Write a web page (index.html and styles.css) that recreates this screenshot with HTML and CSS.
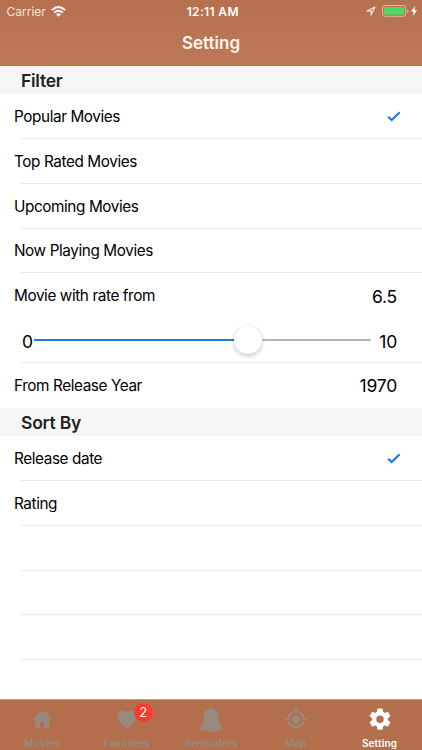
FILE: index.html
```
<!DOCTYPE html>
<html lang="en">
<head>
<meta charset="utf-8">
<title>Setting</title>
<link rel="stylesheet" href="styles.css">
</head>
<body>
<div class="app">
  <header class="header">
    <div class="status">
      <div class="status-left"><span class="carrier">Carrier</span>
        <svg class="wifi" viewBox="0 0 15 11"><g fill="none" stroke="#fff" stroke-width="1.9"><path d="M.8 4.1Q7.5-2 14.2 4.1M3.2 6.6Q7.5 2.7 11.8 6.6"/></g><path fill="#fff" d="M5 8.2Q7.5 6.2 10 8.2L7.5 10.8Z"/></svg>
      </div>
      <span class="time">12:11 AM</span>
      <div class="status-right">
        <svg class="location" viewBox="0 0 10 10"><path d="M.9 4.9 9 1 5.1 9.1V4.9Z" fill="none" stroke="#fbe9e1" stroke-width="1.1" stroke-linejoin="round"/></svg>
        <svg class="battery" viewBox="0 0 28 12"><rect x=".5" y=".5" width="23.2" height="10.8" rx="2.6" fill="none" stroke="#e0b9a6"/><rect x="2" y="2" width="20.2" height="7.8" rx="1.2" fill="#4cd964"/><path d="M25 4q1.5.5 1.5 2T25 8Z" fill="#d9ad98"/></svg>
        <svg class="bolt" viewBox="0 0 6 10"><path d="M4.1 0 0 5.6h2.5L1.8 10 6 4.2H3.5Z" fill="#fff"/></svg>
      </div>
    </div>
    <h1 class="title">Setting</h1>
  </header>
  <main class="list">
    <h2 class="section">Filter</h2>
    <div class="row"><span class="label">Popular Movies</span><svg class="check" viewBox="0 0 14 11"><path d="M1.2 5.7 4.7 9.1 12.7 1.3"/></svg></div>
    <div class="row"><span class="label">Top Rated Movies</span></div>
    <div class="row"><span class="label">Upcoming Movies</span></div>
    <div class="row"><span class="label">Now Playing Movies</span></div>
    <div class="row plain"><span class="label">Movie with rate from</span><span class="value">6.5</span></div>
    <div class="row slider-row"><span class="value">0</span><div class="slider"><div class="fill"></div><div class="thumb"></div><div class="rest"></div></div><span class="value">10</span></div>
    <div class="row plain"><span class="label">From Release Year</span><span class="value">1970</span></div>
    <h2 class="section sort">Sort By</h2>
    <div class="row"><span class="label">Release date</span><svg class="check" viewBox="0 0 14 11"><path d="M1.2 5.7 4.7 9.1 12.7 1.3"/></svg></div>
    <div class="row"><span class="label">Rating</span></div>
    <div class="row"></div>
    <div class="row"></div>
    <div class="row"></div>
  </main>
  <nav class="tabs">
    <div class="tab"><svg class="icon" viewBox="0 0 28 28"><path d="M14 5.600 4.200 14.800h3V22.800h4.900v-5.700h4v5.700H21v-8h3L20.600 11.600V7h-2.700v2.200Z"/></svg><span>Movies</span></div>
    <div class="tab"><svg class="icon" viewBox="0 0 28 28"><path d="M14 23.800 12.600 22.500C7.500 17.900 4.200 14.900 4.200 11.200 4.200 8.200 6.500 5.800 9.600 5.800c1.700 0 3.300.8 4.400 2.100 1.100-1.300 2.700-2.100 4.400-2.100 3.100 0 5.400 2.400 5.400 5.400 0 3.700-3.300 6.700-8.400 11.300Z"/></svg><span>Favorites</span><b class="badge">2</b></div>
    <div class="tab"><svg class="icon" viewBox="0 0 28 28"><path d="M14 2.400c-1.200 0-1.900.8-1.900 1.800C8.300 5.100 6.500 8 6.500 11.600c0 6-1.100 7.900-3.600 10.200C.9 23.900 4.500 26.500 14 26.500s13.100-2.600 11.100-4.700c-2.500-2.300-3.600-4.200-3.600-10.200 0-3.600-1.800-6.500-5.600-7.400 0-1-.7-1.800-1.900-1.800Z"/><path d="M4.200 23.300c3 .6 6 .3 8 .3.300.8.900 1.200 1.800 1.200s1.500-.4 1.800-1.200c2 0 5 .3 8-.3-3 2.600-16.600 2.600-19.600 0Z" fill="#b0775a"/></svg><span>Reminders</span></div>
    <div class="tab"><svg class="icon" viewBox="0 0 28 28"><circle cx="14" cy="14.200" r="4"/><path d="M14 2.800v4M14 21.600v4M2.600 14.200h4M21.400 14.200h4" fill="none" stroke="currentColor" stroke-width="2"/><circle cx="14" cy="14.200" r="7.900" fill="none" stroke="currentColor" stroke-width="2"/></svg><span>Map</span></div>
    <div class="tab active"><svg class="icon" viewBox="0 0 28 28"><path transform="translate(1.300 1.500) scale(1.060)" d="M19.430 12.980c.04-.32.070-.64.070-.980s-.03-.66-.07-.98l2.110-1.650c.19-.15.24-.42.12-.64l-2-3.460c-.12-.22-.39-.3-.61-.22l-2.490 1c-.52-.4-1.080-.73-1.690-.98l-.38-2.650C14.460 2.180 14.250 2 14 2h-4c-.25 0-.46.18-.49.42l-.38 2.650c-.61.25-1.170.59-1.690.98l-2.490-1c-.23-.09-.49 0-.61.22l-2 3.460c-.13.22-.07.49.12.64l2.110 1.650c-.04.32-.07.65-.07.98s.03.66.07.98l-2.110 1.650c-.19.15-.24.42-.12.64l2 3.460c.12.22.39.3.61.22l2.490-1c.52.4 1.080.73 1.690.98l.38 2.650c.03.24.24.42.49.42h4c.25 0 .46-.18.49-.42l.38-2.650c.61-.25 1.170-.59 1.690-.98l2.490 1c.23.09.49 0 .61-.22l2-3.460c.12-.22.07-.49-.12-.64ZM12 15.500A3.500 3.500 0 1 1 12 8.500A3.500 3.500 0 0 1 12 15.500Z"/></svg><span>Setting</span></div>
  </nav>
</div>
</body>
</html>
```
FILE: styles.css
```
* { box-sizing: border-box; }
body { margin: 0; font-family: Inter, "Liberation Sans", sans-serif; color: #000; }
.app { width: 422px; height: 750px; display: flex; flex-direction: column; background: #fff; overflow: hidden; }
.header { height: 66px; flex: none; background: linear-gradient(#b6704f, #bd7957); border-bottom: 1px solid #b87a5c; color: #fff; }
.status { display: grid; grid-template-columns: 1fr auto 1fr; height: 22px; align-items: center; padding: 0 5px 0 6.5px; font-size: 12px; }
.status-left, .status-right { display: flex; align-items: center; }
.carrier { color: #f8e3da; letter-spacing: 0; }
.wifi { width: 15px; height: 11px; margin-left: 5px; }
.time { font-weight: 600; font-size: 12px; letter-spacing: .35px; padding-left: 2px; }
.status-right { justify-content: flex-end; }
.location { width: 10px; height: 10px; }
.battery { width: 28px; height: 12px; margin-left: 6px; }
.bolt { width: 6px; height: 10px; margin-left: 1px; }
.title { margin: 0; font-size: 17px; line-height: 42px; font-weight: 600; text-align: center; color: #fff5ef; letter-spacing: 0; }
.list { flex: 1; min-height: 0; }
.section { margin: 0; height: 28.2px; padding-left: 21px; background: #f6f6f6; font-size: 17.5px; line-height: 29px; font-weight: 600; color: #222; letter-spacing: -.25px; }
.section.sort { height: 28.5px; }
.row { height: 44.8px; display: flex; align-items: center; justify-content: space-between; padding: 0 25px 0 14px; background: linear-gradient(#e9e9e9, #e9e9e9) 21px 100% / 100% 1px no-repeat; }
.row.plain { background: none; }
.label { font-size: 15.3px; letter-spacing: -.4px; }
.value { font-size: 17.5px; letter-spacing: -.2px; padding-top: 1px; }
.check { width: 14px; height: 11px; margin-right: -4px; }
.check path { fill: none; stroke: #147be8; stroke-width: 2.1; }
.slider-row { padding-left: 22px; }
.slider { display: flex; align-items: center; width: 337px; margin: 0 8px 2px 1px; }
.fill { width: 200px; height: 2px; background: #217dde; }
.thumb { width: 28px; height: 28px; border-radius: 50%; background: #fff; box-shadow: 0 2px 5px rgba(0,0,0,.22), 0 0 1px rgba(0,0,0,.08); }
.rest { flex: 1; height: 2px; background: #b5b5b5; }
.tabs { height: 51px; flex: none; display: grid; grid-template-columns: 84.5px 84.5px 84.5px 84px 84px; background: #b36e4c; border-top: 1px solid #c39b87; }
.tab { position: relative; display: flex; flex-direction: column; align-items: center; color: #978a80; font-size: 10px; font-weight: 600; letter-spacing: .15px; line-height: 12px; padding-top: 5px; }
.tab.active { color: #fff; }
.icon { width: 28px; height: 28px; margin-bottom: 4px; fill: currentColor; }
.badge { position: absolute; left: 50%; top: 3px; margin-left: 7px; width: 19px; height: 19px; border-radius: 50%; background: #fb3b30; color: #fff; font-size: 13px; font-weight: 400; line-height: 19px; text-align: center; }
```
